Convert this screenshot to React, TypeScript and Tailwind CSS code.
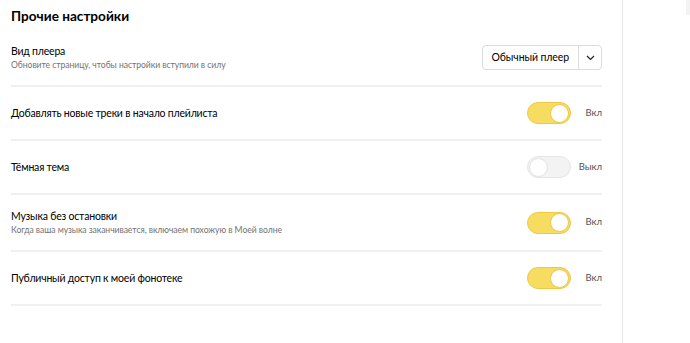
import React, { useState } from "react";

function Toggle({ on }: { on: boolean }) {
  return (
    <div className="flex items-center">
      <div
        className={
          on
            ? "w-[44px] h-[22px] rounded-full bg-[#f7dc62] border border-[#f0c744] flex items-center justify-end px-[1px]"
            : "w-[44px] h-[22px] rounded-full bg-[#f3f3f3] border border-[#e6e6e6] flex items-center justify-start px-[1px]"
        }
      >
        <div
          className={
            on
              ? "w-[19px] h-[19px] rounded-full bg-white border border-[#f0c744]"
              : "w-[19px] h-[19px] rounded-full bg-white border border-[#e3e3e3]"
          }
        />
      </div>
      <div className="w-[31px] text-right text-[9.5px] text-[#555]">{on ? "Вкл" : "Выкл"}</div>
    </div>
  );
}

function Row({ title, hint, children, tall }: { title: string; hint?: string; children: React.ReactNode; tall?: boolean }) {
  return (
    <div className={(tall ? "h-[57px]" : "h-[54px]") + " flex items-center justify-between border-b-2 border-[#f0f0f0]"}>
      <div className="flex flex-col">
        <div className="text-[10.5px] leading-[13px] tracking-[-0.2px] text-black">{title}</div>
        {hint && <div className="text-[8.6px] leading-[12px] tracking-[-0.05px] text-[#737373] mt-[1px]">{hint}</div>}
      </div>
      {children}
    </div>
  );
}

export default function App() {
  const [opts] = useState({ top: true, dark: false, nonstop: true, pub: true });

  return (
    <div className="w-[690px] h-[343px] bg-white flex overflow-hidden" style={{ fontFamily: "Lato, 'Noto Sans', sans-serif" }}>
      <div className="w-[623px] pl-[11px] pr-[20px] border-r border-[#e8e8e8]">
        <h2 className="text-[13.6px] font-bold leading-[18px] text-black pt-[7px] h-[30px]">Прочие настройки</h2>
        <Row title="Вид плеера" hint="Обновите страницу, чтобы настройки вступили в силу" tall>
          <div className="flex h-[25px] border border-[#dcdcdc] rounded-[4px] text-[10.5px] tracking-[-0.1px] text-black">
            <div className="px-[9px] flex items-center border-r border-[#dcdcdc]">Обычный плеер</div>
            <div className="w-[22px] flex items-center justify-center">
              <svg width="9" height="6" viewBox="0 0 9 6" fill="none">
                <path d="M1 1l3.5 3.5L8 1" stroke="#222" strokeWidth="1.2" />
              </svg>
            </div>
          </div>
        </Row>
        <Row title="Добавлять новые треки в начало плейлиста">
          <Toggle on={opts.top} />
        </Row>
        <Row title="Тёмная тема">
          <Toggle on={opts.dark} />
        </Row>
        <Row title="Музыка без остановки" hint="Когда ваша музыка заканчивается, включаем похожую в Моей волне" tall>
          <Toggle on={opts.nonstop} />
        </Row>
        <Row title="Публичный доступ к моей фонотеке">
          <Toggle on={opts.pub} />
        </Row>
      </div>
      <div className="flex-1 flex justify-end">
        <div className="w-[4px] h-[15px] bg-[#f3f3f3]" />
      </div>
    </div>
  );
}
